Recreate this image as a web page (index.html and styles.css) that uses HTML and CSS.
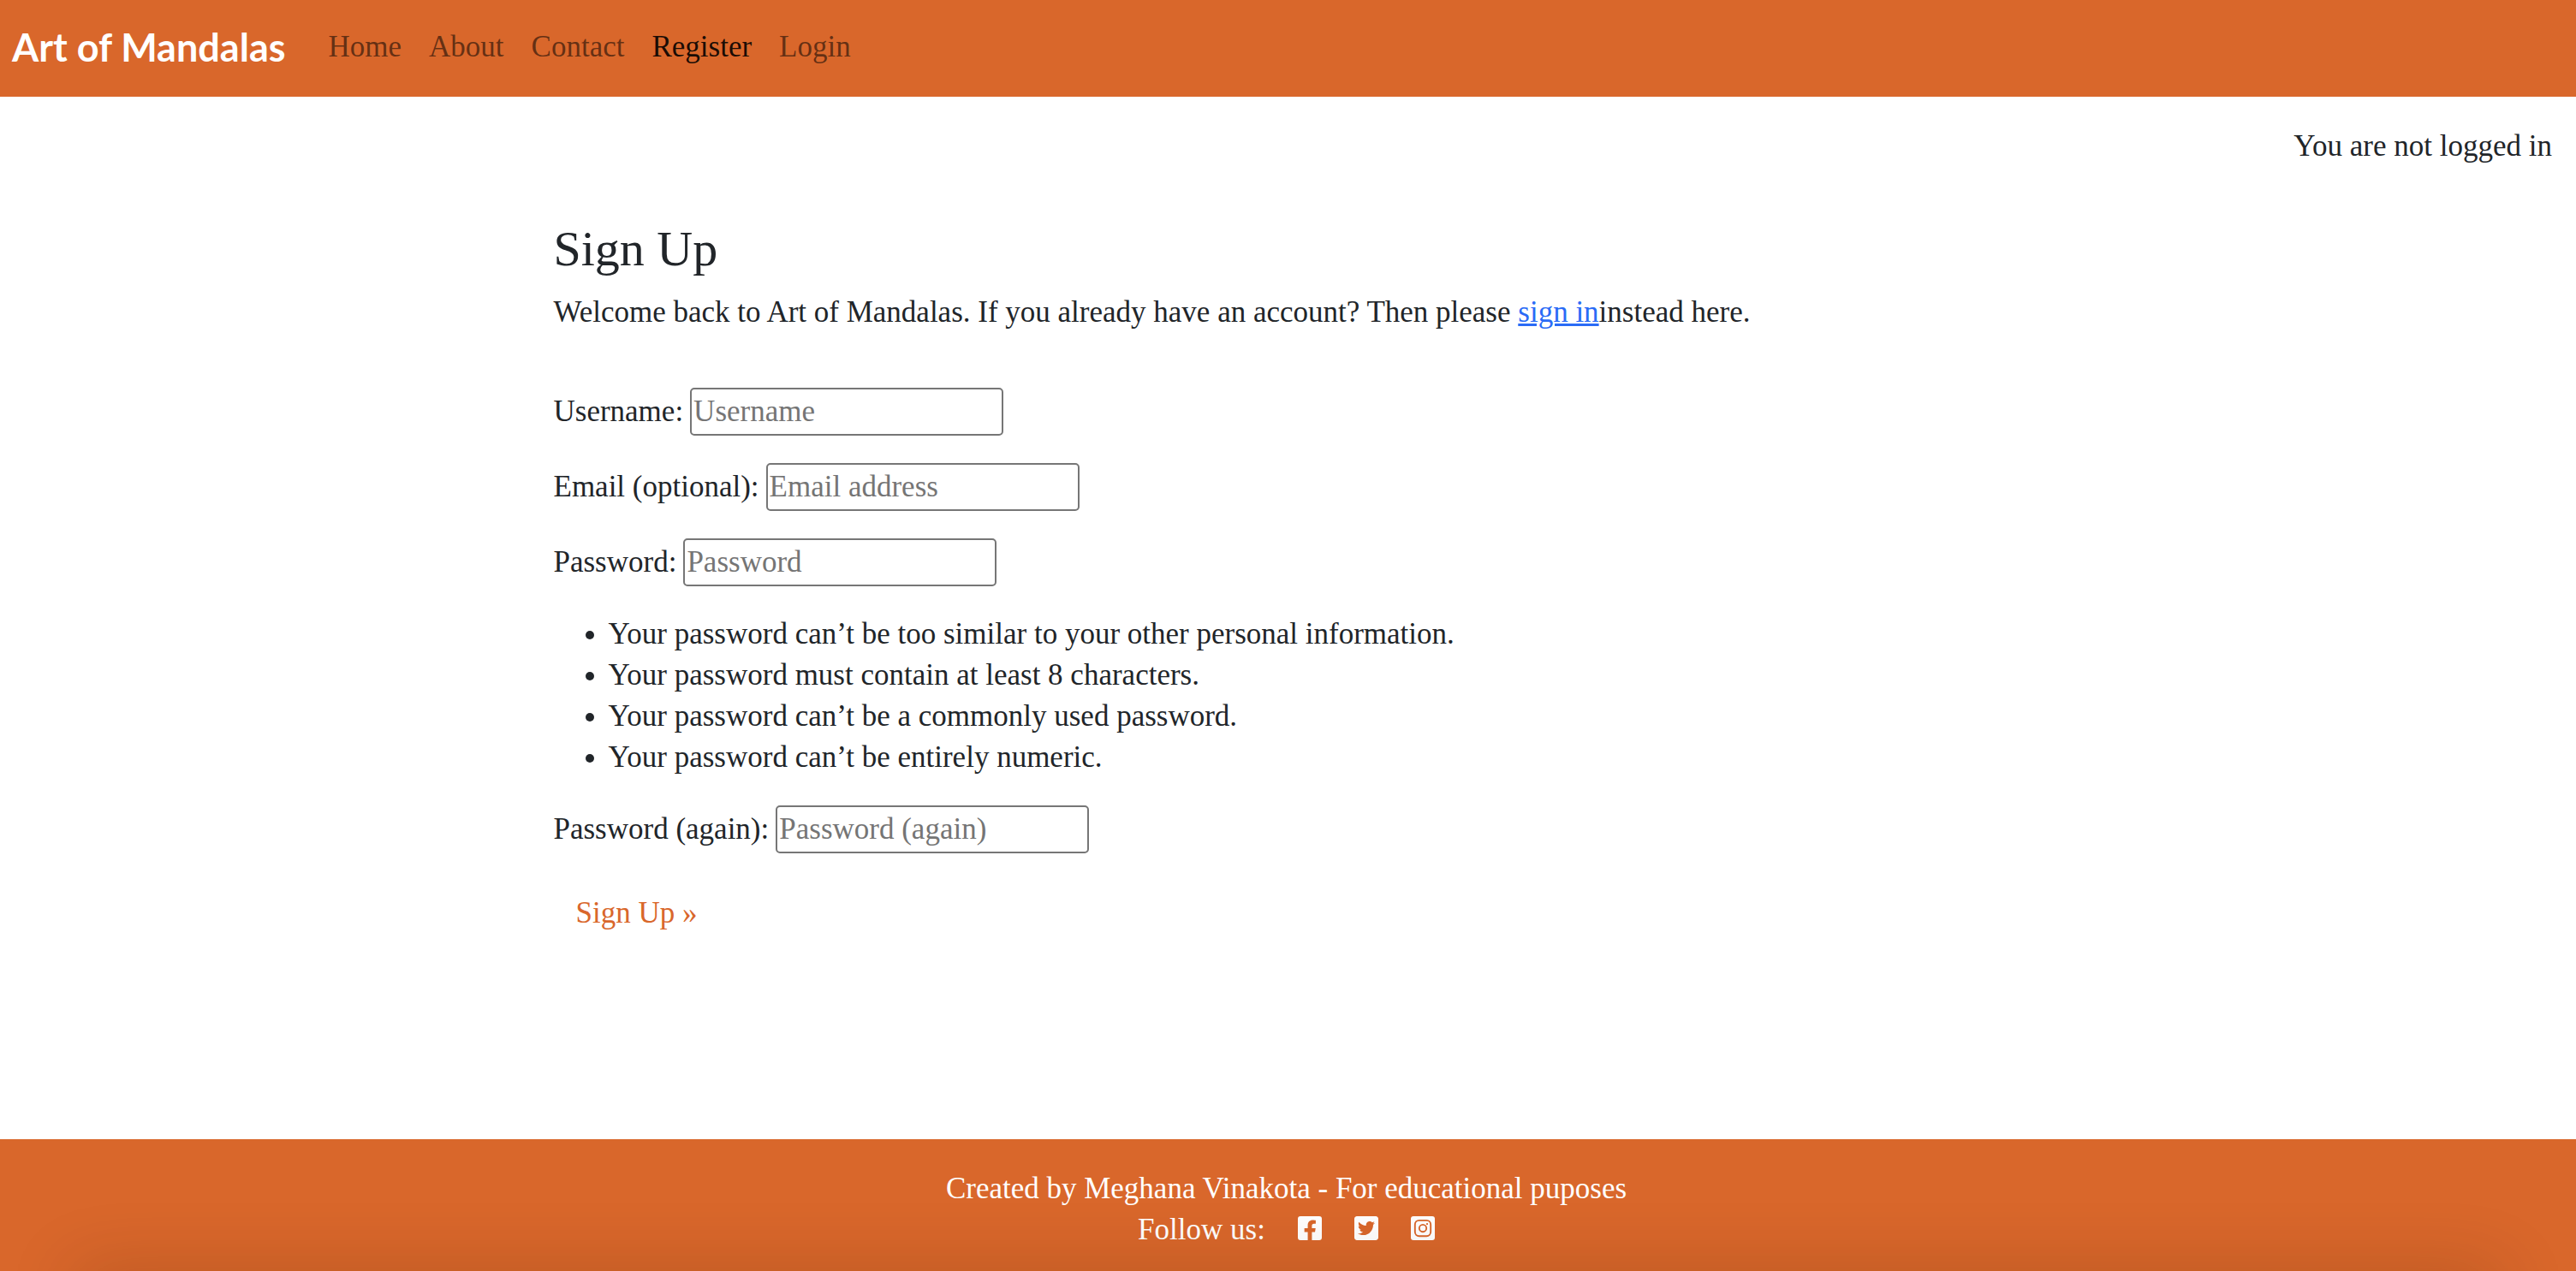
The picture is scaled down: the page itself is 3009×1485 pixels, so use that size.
FILE: index.html
```html
<!DOCTYPE html>
<html lang="en">
<head>
<meta charset="utf-8">
<meta name="viewport" content="width=device-width, initial-scale=1">
<title>Art of Mandalas - Sign Up</title>
<link rel="stylesheet" href="styles.css">
</head>
<body>
<header class="navbar">
  <a class="brand" href="#">Art of Mandalas</a>
  <nav class="nav">
    <a class="nav-link" href="#">Home</a>
    <a class="nav-link" href="#">About</a>
    <a class="nav-link" href="#">Contact</a>
    <a class="nav-link active" href="#" aria-current="page">Register</a>
    <a class="nav-link" href="#">Login</a>
  </nav>
</header>
<p class="login-status">You are not logged in</p>
<main class="content">
  <h1 class="title">Sign Up</h1>
  <p class="intro">Welcome back to Art of Mandalas. If you already have an account? Then please <a class="link" href="#">sign in</a>instead here.</p>
  <form class="signup">
    <div class="field">
      <label for="username">Username:</label>
      <input id="username" type="text" placeholder="Username">
    </div>
    <div class="field">
      <label for="email">Email (optional):</label>
      <input id="email" type="email" placeholder="Email address">
    </div>
    <div class="field">
      <label for="password1">Password:</label>
      <input id="password1" type="password" placeholder="Password">
    </div>
    <ul class="hints">
      <li>Your password can’t be too similar to your other personal information.</li>
      <li>Your password must contain at least 8 characters.</li>
      <li>Your password can’t be a commonly used password.</li>
      <li>Your password can’t be entirely numeric.</li>
    </ul>
    <div class="field">
      <label for="password2">Password (again):</label>
      <input id="password2" type="password" placeholder="Password (again)">
    </div>
    <button class="submit" type="submit">Sign Up »</button>
  </form>
</main>
<footer class="footer">
  <p class="credit">Created by Meghana Vinakota - For educational puposes</p>
  <div class="social">
    <span>Follow us:</span>
    <a class="social-link" href="#" aria-label="Facebook"><svg class="icon" viewBox="0 32 448 448"><path d="M400 32H48A48 48 0 0 0 0 80v352a48 48 0 0 0 48 48h137.25V327.69h-63V256h63v-54.64c0-62.15 37-96.48 93.67-96.48 27.14 0 55.52 4.84 55.52 4.84v61h-31.27c-30.81 0-40.42 19.12-40.42 38.73V256h68.78l-11 71.69h-57.78V480H400a48 48 0 0 0 48-48V80a48 48 0 0 0-48-48z"/></svg></a>
    <a class="social-link" href="#" aria-label="Twitter"><svg class="icon" viewBox="0 32 448 448"><path d="M400 32H48C21.5 32 0 53.5 0 80v352c0 26.5 21.5 48 48 48h352c26.5 0 48-21.5 48-48V80c0-26.5-21.5-48-48-48zm-48.9 158.8c.2 2.8.2 5.7.2 8.5 0 86.7-66 186.6-186.6 186.6-37.2 0-71.7-10.8-100.7-29.4 5.3.6 10.4.8 15.8.8 30.7 0 58.9-10.4 81.4-28-28.8-.6-53-19.5-61.3-45.5 10.1 1.5 19.2 1.5 29.6-1.2-30-6.1-52.5-32.5-52.5-64.4v-.8c8.7 4.9 18.9 7.9 29.6 8.3a65.447 65.447 0 0 1-29.2-54.6c0-12.2 3.2-23.4 8.9-33.1 32.3 39.8 80.8 65.8 135.2 68.6-9.3-44.5 24-80.6 64-80.6 18.9 0 35.9 7.9 47.9 20.7 14.8-2.8 29-8.3 41.6-15.8-4.9 15.2-15.2 28-28.8 36.1 13.2-1.4 26-5.1 37.8-10.2-8.9 13.1-20.1 24.7-32.9 34z"/></svg></a>
    <a class="social-link" href="#" aria-label="Instagram"><svg class="icon" viewBox="0 0 448 448"><rect width="448" height="448" rx="48"/><rect class="cut" x="77" y="77" width="294" height="294" rx="78"/><circle class="cut" cx="224" cy="224" r="67"/><circle class="dot" cx="304" cy="144" r="18"/></svg></a>
  </div>
</footer>
</body>
</html>
```
FILE: styles.css
```css
:root {
  --orange: #d9672b;
  --ink: #212529;
}

* {
  box-sizing: border-box;
}

body {
  margin: 0;
  min-height: 100vh;
  display: flex;
  flex-direction: column;
  background: #fff;
  color: var(--ink);
  font-family: "Liberation Serif", "Times New Roman", serif;
  font-size: 35px;
  line-height: 48px;
}

p,
h1,
ul {
  margin: 0;
}

.navbar {
  display: flex;
  align-items: center;
  gap: 34px;
  height: 113px;
  padding: 0 14px 4px;
  background: var(--orange);
}

.brand {
  color: #fff;
  font-family: Lato, sans-serif;
  font-size: 45px;
  font-weight: 700;
  text-decoration: none;
}

.nav {
  display: flex;
}

.nav-link {
  padding: 0 16px;
  color: rgba(0, 0, 0, 0.55);
  text-decoration: none;
}

.nav-link.active {
  color: rgba(0, 0, 0, 0.9);
}

.login-status {
  padding: 34px 28px 0;
  text-align: right;
}

.content {
  flex: 1;
  width: 100%;
  max-width: 1716px;
  margin: 0 auto;
  padding: 62px 0;
}

.title {
  margin-bottom: 16px;
  font-size: 58px;
  font-weight: 400;
  line-height: 68px;
}

.link {
  color: #2a6bf6;
  text-decoration-thickness: 3px;
}

.signup {
  display: flex;
  flex-direction: column;
  align-items: flex-start;
  gap: 32px;
  padding-top: 64px;
}

.field {
  display: flex;
  align-items: center;
  gap: 8px;
}

.field input {
  width: 366px;
  height: 56px;
  padding: 2px;
  border: 2px solid #767676;
  border-radius: 5px;
  background: #fff;
  color: var(--ink);
  font: inherit;
}

.field input::placeholder {
  color: #757575;
  opacity: 1;
}

.hints {
  padding-left: 64px;
}

.submit {
  margin: 0;
  padding: 14px 26px;
  border: 0;
  background: none;
  color: var(--orange);
  font: inherit;
}

.footer {
  position: relative;
  overflow: hidden;
  padding: 34px 4px 24px 0;
  background: var(--orange);
  color: #fff;
  text-align: center;
}

/* Soft shade rising from the bottom edge */
.footer::after {
  content: "";
  position: absolute;
  right: 110px;
  bottom: -40px;
  left: 110px;
  height: 20px;
  box-shadow: 0 0 80px 20px rgba(70, 30, 10, 0.22);
  pointer-events: none;
}

.social {
  display: flex;
  justify-content: center;
  align-items: center;
  gap: 38px;
}

.social-link {
  display: flex;
  padding-bottom: 4px;
}

.icon {
  width: 28px;
  height: 28px;
  fill: #fff;
}

.icon .cut {
  fill: none;
  stroke: var(--orange);
  stroke-width: 30;
}

.icon .dot {
  fill: var(--orange);
}
```
